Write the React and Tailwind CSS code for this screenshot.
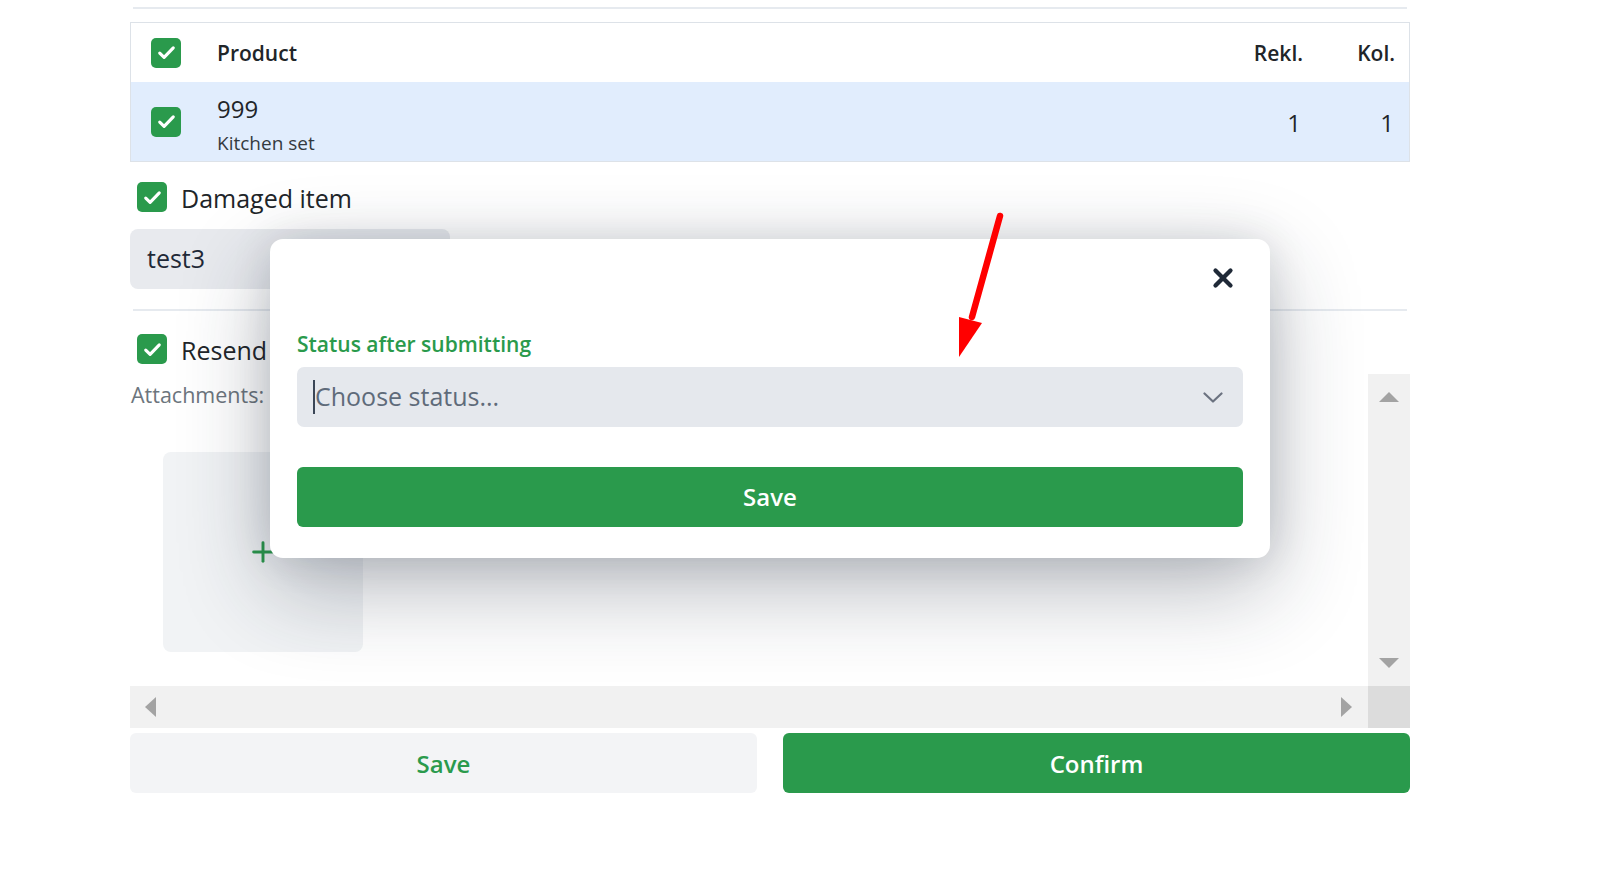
import { X, Plus } from 'lucide-react'

function CheckBox() {
  return (
    <span className="flex h-[30px] w-[30px] shrink-0 items-center justify-center rounded-[5px] bg-[#2a9a4c]">
      <svg viewBox="0 0 24 24" className="h-[25px] w-[25px]" fill="none" stroke="white" strokeWidth="3" strokeLinecap="round" strokeLinejoin="round">
        <path d="M5.5 12.6l4.2 4.1 8.8-9.2" />
      </svg>
    </span>
  )
}

function Tri({ dir }) {
  const pts = {
    up: '0,10 10,0 20,10',
    down: '0,0 20,0 10,10',
    left: '11,0 11,20 0,10',
    right: '0,0 11,10 0,20',
  }[dir]
  const vertical = dir === 'up' || dir === 'down'
  return (
    <svg viewBox={vertical ? '0 0 20 10' : '0 0 11 20'} className={vertical ? 'h-[10px] w-[20px]' : 'h-[20px] w-[11px]'}>
      <polygon points={pts} fill="#a3a3a3" />
    </svg>
  )
}

export default function App() {
  return (
    <div className="relative min-h-[879px] overflow-hidden bg-white font-['Open_Sans',sans-serif] text-[#212529]">
      <div className="ml-[130px] w-[1280px] pt-[7px]">
        <div className="mx-[3px] h-[2px] bg-[#e6eaef]" />

        {/* products table */}
        <div className="mt-[13px] border border-[#dde2e8]">
          <div className="flex h-[59px] items-center bg-white">
            <div className="w-[86px] pl-[20px]"><CheckBox /></div>
            <div className="flex-1 pt-[3px] text-[21px] font-semibold">Product</div>
            <div className="w-[100px] pt-[3px] text-right text-[21px] font-semibold">Rekl.</div>
            <div className="w-[93px] pr-[1px] pt-[3px] text-right text-[21px] font-semibold">Kol.</div>
            <div className="w-[13px]" />
          </div>
          <div className="flex h-[79px] items-center bg-[#e1edfd]">
            <div className="w-[86px] pl-[20px]"><CheckBox /></div>
            <div className="flex flex-1 flex-col self-start pt-[11px]">
              <div className="text-[24px] leading-[32px]">999</div>
              <div className="mt-[4px] text-[19px] leading-[28px] text-[#343a40]">Kitchen set</div>
            </div>
            <div className="w-[100px] pr-[2px] pt-[2px] text-right text-[24px]">1</div>
            <div className="w-[93px] pr-[2px] pt-[2px] text-right text-[24px]">1</div>
            <div className="w-[13px]" />
          </div>
        </div>

        <div className="mt-[20px] flex h-[30px] items-center gap-[14px] pl-[7px]">
          <CheckBox />
          <span className="pt-[1px] text-[25px] leading-[30px]">Damaged item</span>
        </div>

        <div className="mt-[17px] flex h-[60px] w-[320px] items-center rounded-[8px] bg-[#e8eaee] pl-[17px] text-[25px] font-medium text-[#1f2937]">
          test3
        </div>

        <div className="mx-[3px] mt-[20px] h-[2px] bg-[#e6eaef]" />

        <div className="mt-[23px] flex h-[30px] items-center gap-[14px] pl-[7px]">
          <CheckBox />
          <span className="pt-[1px] text-[25px] leading-[30px]">Resend</span>
        </div>

        {/* attachments scroll area */}
        <div className="mt-[10px] flex flex-col">
          <div className="flex h-[312px]">
            <div className="flex-1 overflow-hidden">
              <div className="mt-[6px] pl-[1px] text-[21.5px] leading-[30px] text-[#6c757d]">Attachments:</div>
              <div className="ml-[33px] mt-[42px] flex h-[200px] w-[200px] items-center justify-center rounded-[8px] bg-[#f1f3f5]">
                <Plus className="h-[32px] w-[32px] text-[#2a9a4c]" strokeWidth={2.2} />
              </div>
            </div>
            <div className="flex w-[42px] flex-col items-center justify-between bg-[#f1f1f1] py-[18px]">
              <Tri dir="up" />
              <Tri dir="down" />
            </div>
          </div>
          <div className="flex h-[42px]">
            <div className="flex flex-1 items-center justify-between bg-[#f1f1f1] pl-[15px] pr-[16px]">
              <Tri dir="left" />
              <Tri dir="right" />
            </div>
            <div className="w-[42px] bg-[#dcdcdc]" />
          </div>
        </div>

        <div className="mt-[5px] flex gap-[26px]">
          <button className="flex h-[60px] flex-1 items-center justify-center rounded-[6px] bg-[#f3f4f6] pt-[1px] text-[24px] font-semibold text-[#2a9a4c]">Save</button>
          <button className="flex h-[60px] flex-1 items-center justify-center rounded-[6px] bg-[#2a9a4c] pt-[1px] text-[24px] font-semibold text-white">Confirm</button>
        </div>
      </div>

      {/* status modal */}
      <div className="absolute left-[270px] top-[239px] w-[1000px] rounded-[13px] bg-white px-[27px] pb-[31px] pt-[27px] shadow-[0_0_40px_rgba(15,23,42,0.12),0_30px_90px_rgba(30,41,59,0.32)]">
        <div className="flex h-[24px] justify-end pr-[8px]">
          <X className="-mr-[3px] -mt-[3px] h-[30px] w-[30px] text-[#1f2937]" strokeWidth={3.4} />
        </div>
        <div className="mt-[40px] text-[21px] font-semibold leading-[28px] text-[#2a9a4c]">Status after submitting</div>
        <div className="mt-[9px] flex h-[60px] items-center rounded-[7px] bg-[#e5e8ed] pl-[16px] pr-[20px]">
          <span className="h-[34px] w-[2px] bg-[#3b4656]" />
          <span className="flex-1 text-[25px] text-[#5f6b7a]">Choose status...</span>
          <svg viewBox="0 0 20 11" className="h-[11px] w-[20px]" fill="none" stroke="#6b7280" strokeWidth="2.2" strokeLinecap="round" strokeLinejoin="round">
            <polyline points="1.5,1.5 10,9.5 18.5,1.5" />
          </svg>
        </div>
        <button className="mt-[40px] flex h-[60px] w-full items-center justify-center rounded-[6px] bg-[#2a9a4c] text-[24px] font-semibold text-white">Save</button>
      </div>

      {/* red annotation arrow */}
      <svg className="absolute left-[950px] top-[205px] h-[160px] w-[60px]" viewBox="0 0 60 160">
        <line x1="50" y1="11" x2="22" y2="112" stroke="#ff0000" strokeWidth="6.5" strokeLinecap="round" />
        <polygon points="9,112 32,118 9,152" fill="#ff0000" />
      </svg>
    </div>
  )
}
